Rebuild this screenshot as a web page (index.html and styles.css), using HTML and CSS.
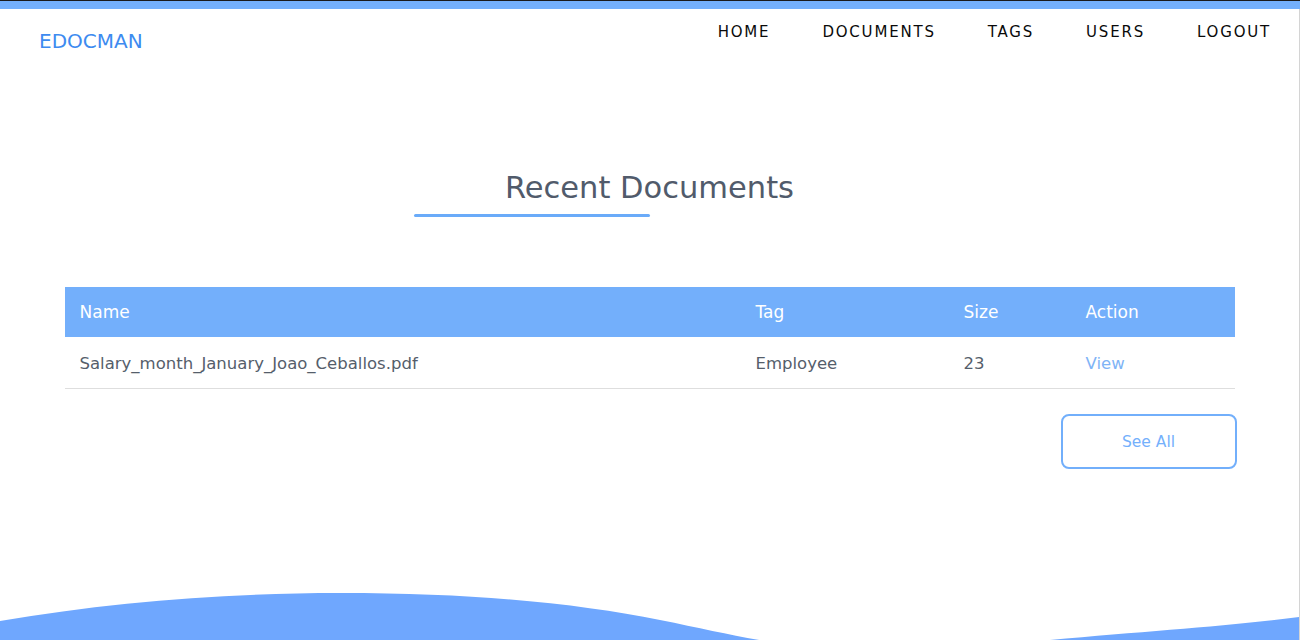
FILE: index.html
```html
<!DOCTYPE html>
<html lang="en">
<head>
<meta charset="utf-8">
<title>EDOCMAN</title>
<link rel="stylesheet" href="styles.css">
</head>
<body>
<div class="topbar"></div>
<div class="page">
  <header class="nav">
    <a class="logo" href="#">EDOCMAN</a>
    <ul class="menu">
      <li><a href="#">HOME</a></li>
      <li><a href="#">DOCUMENTS</a></li>
      <li><a href="#">TAGS</a></li>
      <li><a href="#">USERS</a></li>
      <li><a href="#">LOGOUT</a></li>
    </ul>
  </header>
  <main class="content">
    <h2 class="title">Recent Documents</h2>
    <div class="title-bar"></div>
    <table class="docs">
      <thead>
        <tr>
          <th class="c-name">Name</th>
          <th class="c-tag">Tag</th>
          <th class="c-size">Size</th>
          <th class="c-action">Action</th>
        </tr>
      </thead>
      <tbody>
        <tr>
          <td>Salary_month_January_Joao_Ceballos.pdf</td>
          <td>Employee</td>
          <td>23</td>
          <td><a class="view" href="#">View</a></td>
        </tr>
      </tbody>
    </table>
    <div class="actions">
      <button class="see-all">See All</button>
    </div>
  </main>
  <svg class="wave" viewBox="0 0 1299 50" preserveAspectRatio="none" aria-hidden="true">
    <path d="M0,31 C110,12 230,3 340,3 C480,3 580,14 660,30 C715,41 750,50 800,56 C890,66 985,58 1050,50 C1150,41 1230,36 1299,27 L1299,50 L0,50 Z" fill="#6fa7fe"/>
  </svg>
</div>
</body>
</html>
```

FILE: styles.css
```css
html, body {
  margin: 0;
  padding: 0;
  background: #ffffff;
}

body {
  font-family: "DejaVu Sans", "Liberation Sans", sans-serif;
  overflow: hidden;
}

.topbar {
  height: 9px;
  background: #74b0fc;
  border-top: 1px solid #1b1b1b;
  box-sizing: border-box;
}

.page {
  height: 631px;
  display: flex;
  flex-direction: column;
  border-right: 1px solid #d4d4d4;
  box-sizing: border-box;
  overflow: hidden;
}

.nav {
  display: flex;
  justify-content: space-between;
  align-items: flex-start;
  padding: 0 28px 0 39px;
}

.logo {
  margin-top: 20px;
  font-size: 20px;
  color: #3d8bf0;
  text-decoration: none;
}

.menu {
  list-style: none;
  margin: 13px 0 0;
  padding: 0;
  display: flex;
  gap: 52px;
}

.menu a {
  font-size: 15px;
  letter-spacing: 1.8px;
  color: #0a0a0a;
  text-decoration: none;
}

.content {
  display: flex;
  flex-direction: column;
  align-items: center;
}

.title {
  margin: 117px 0 0;
  font-size: 30.5px;
  font-weight: normal;
  color: #515b6b;
  line-height: 35px;
  text-align: center;
}

.title-bar {
  align-self: flex-start;
  margin: 9px 0 0 calc(50% - 236px);
  width: 236px;
  height: 3px;
  border-radius: 2px;
  background: #6aabf9;
}

.docs {
  margin-top: 70px;
  width: 1170px;
  border-collapse: collapse;
}

.docs th {
  height: 50px;
  padding: 0 15px;
  background: #73affb;
  color: #ffffff;
  font-size: 17px;
  font-weight: normal;
  text-align: left;
}

.docs td {
  height: 50px;
  padding: 1px 15px 0;
  border-bottom: 1px solid #dedede;
  color: #555e6b;
  font-size: 16.5px;
}

.c-name { width: 646px; }
.c-tag { width: 178px; }
.c-size { width: 92px; }

.view {
  color: #7fb4f6;
  text-decoration: none;
}

.actions {
  width: 1170px;
  display: flex;
  justify-content: flex-end;
}

.see-all {
  margin: 25px -2px 0 0;
  width: 176px;
  height: 55px;
  border: 2px solid #72affb;
  border-radius: 8px;
  background: #ffffff;
  color: #74b0fc;
  font-family: inherit;
  font-size: 15.5px;
}

.wave {
  margin-top: auto;
  display: block;
  width: 100%;
  height: 50px;
  flex-shrink: 0;
}
```
